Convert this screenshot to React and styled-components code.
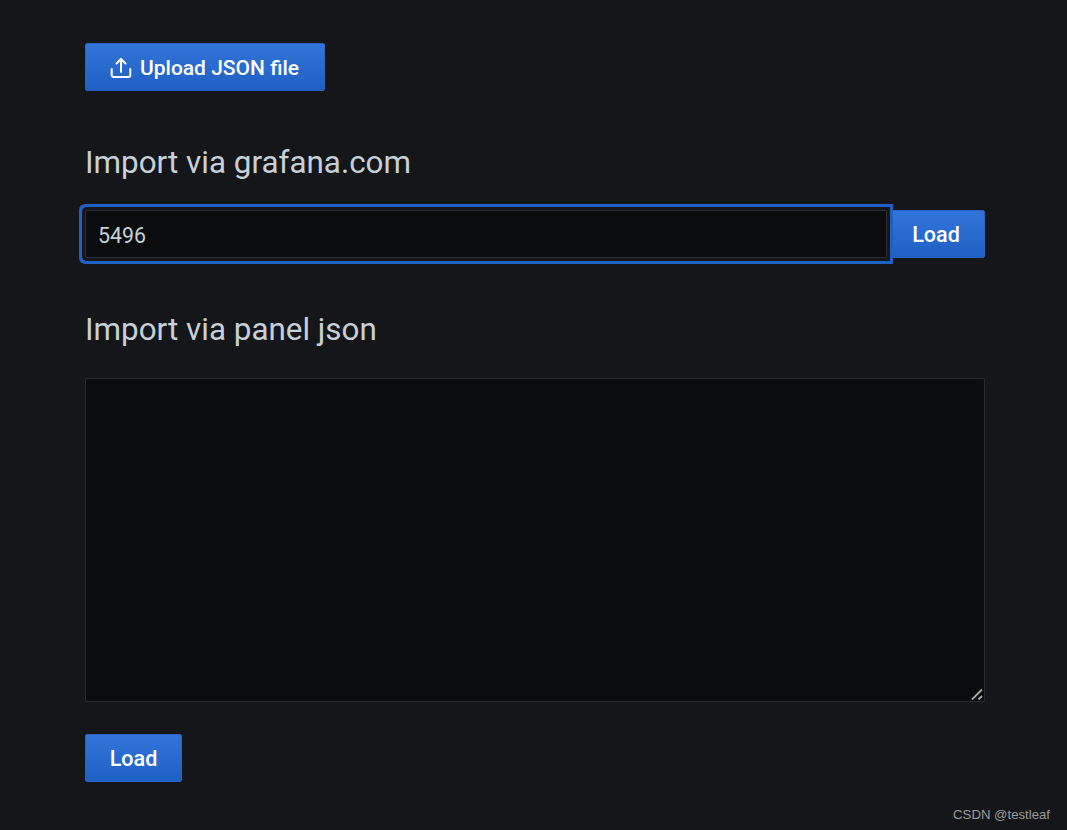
import React from "react";
import styled, { createGlobalStyle } from "styled-components";

const GlobalStyle = createGlobalStyle`
    html, body {
        margin: 0;
        height: 830px;
        overflow: hidden;
        background-color: #141619;
    }
    * {
        box-sizing: border-box;
    }
`;

const Page = styled.div`
    position: relative;
    width: 1067px;
    height: 830px;
    padding: 43px 82px 0 85px;
    background-color: #141619;
    font-family: Roboto, "Liberation Sans", sans-serif;
`;

const Button = styled.button`
    display: inline-flex;
    align-items: center;
    justify-content: center;
    gap: 5px;
    height: 48px;
    width: ${({ $width }) => $width}px;
    padding: ${({ $nudge }) => $nudge}px 0 0;
    flex-shrink: 0;
    color: #fff;
    font-family: inherit;
    font-size: ${({ $size }) => $size}px;
    font-weight: 500;
    border: 1px solid #2c63bf;
    border-radius: 2px;
    background: linear-gradient(180deg, #3274d9 0%, #1f60c4 100%);
`;

const Heading = styled.h2`
    margin: 54px 0 0;
    height: 34px;
    color: #c7d0d9;
    font-size: 31.4px;
    font-weight: 400;
    line-height: 36px;
`;

const InputRow = styled.div`
    display: flex;
    align-items: center;
    margin-top: 31px;
`;

const Input = styled.input`
    position: relative;
    z-index: 1;
    flex: 1;
    min-width: 0;
    height: 48px;
    padding: 2px 12px 0;
    color: #c7d0d9;
    font-family: inherit;
    font-size: 21.3px;
    background-color: #0b0c0e;
    border: 1px solid #2c2e33;
    border-radius: 2px 0 0 2px;
    outline: none;
    box-shadow: 0 0 0 3px #141619, 0 0 0 6px #1f60c4;
`;

const TextAreaWrap = styled.div`
    position: relative;
    height: 324px;
    margin-top: 32px;
`;

const TextArea = styled.textarea`
    display: block;
    width: 100%;
    height: 100%;
    padding: 8px 13px;
    color: #c7d0d9;
    background-color: #0b0c0e;
    border: 1px solid #282a2e;
    border-radius: 2px;
    outline: none;
    resize: none;
`;

const Grip = styled.svg`
    position: absolute;
    right: 2px;
    bottom: 2px;
    pointer-events: none;
`;

const IconSvg = styled.svg`
    margin: 0 1.5px 0 -1.5px;
`;

const Footer = styled.div`
    margin-top: 32px;
`;

const Watermark = styled.span`
    position: absolute;
    right: 17px;
    bottom: 7px;
    color: #9a9b9d;
    font-family: "Liberation Sans", Arial, sans-serif;
    font-size: 13.2px;
    line-height: 16px;
`;

const UploadIcon = () => (
    <IconSvg
        width="24"
        height="24"
        viewBox="0 0 24 24"
        fill="none"
        stroke="#fff"
        strokeWidth="2"
        strokeLinecap="round"
        strokeLinejoin="round"
    >
        <path d="M2.7 13v6a2 2 0 0 0 2 2h14.6a2 2 0 0 0 2-2v-6" />
        <path d="M12 16V3" />
        <path d="M7.5 7.5 12 3l4.5 4.5" />
    </IconSvg>
);

const App = () => {
    return (
        <Page>
            <GlobalStyle />
            <Button $width={240} $size={21} $nudge={2}>
                <UploadIcon />
                Upload JSON file
            </Button>

            <Heading>Import via grafana.com</Heading>
            <InputRow>
                <Input defaultValue="5496" />
                <Button $width={98} $size={21.6} $nudge={1}>Load</Button>
            </InputRow>

            <Heading>Import via panel json</Heading>
            <TextAreaWrap>
                <TextArea />
                <Grip width="12" height="12" viewBox="0 0 12 12" fill="none" stroke="#a8a8a8" strokeWidth="1.8">
                    <path d="M1 11.5 11 1.5" />
                    <path d="M7.5 11.5 11 8" />
                </Grip>
            </TextAreaWrap>

            <Footer>
                <Button $width={97} $size={21.6} $nudge={1}>Load</Button>
            </Footer>

            <Watermark>CSDN @testleaf</Watermark>
        </Page>
    );
};

export default App;
